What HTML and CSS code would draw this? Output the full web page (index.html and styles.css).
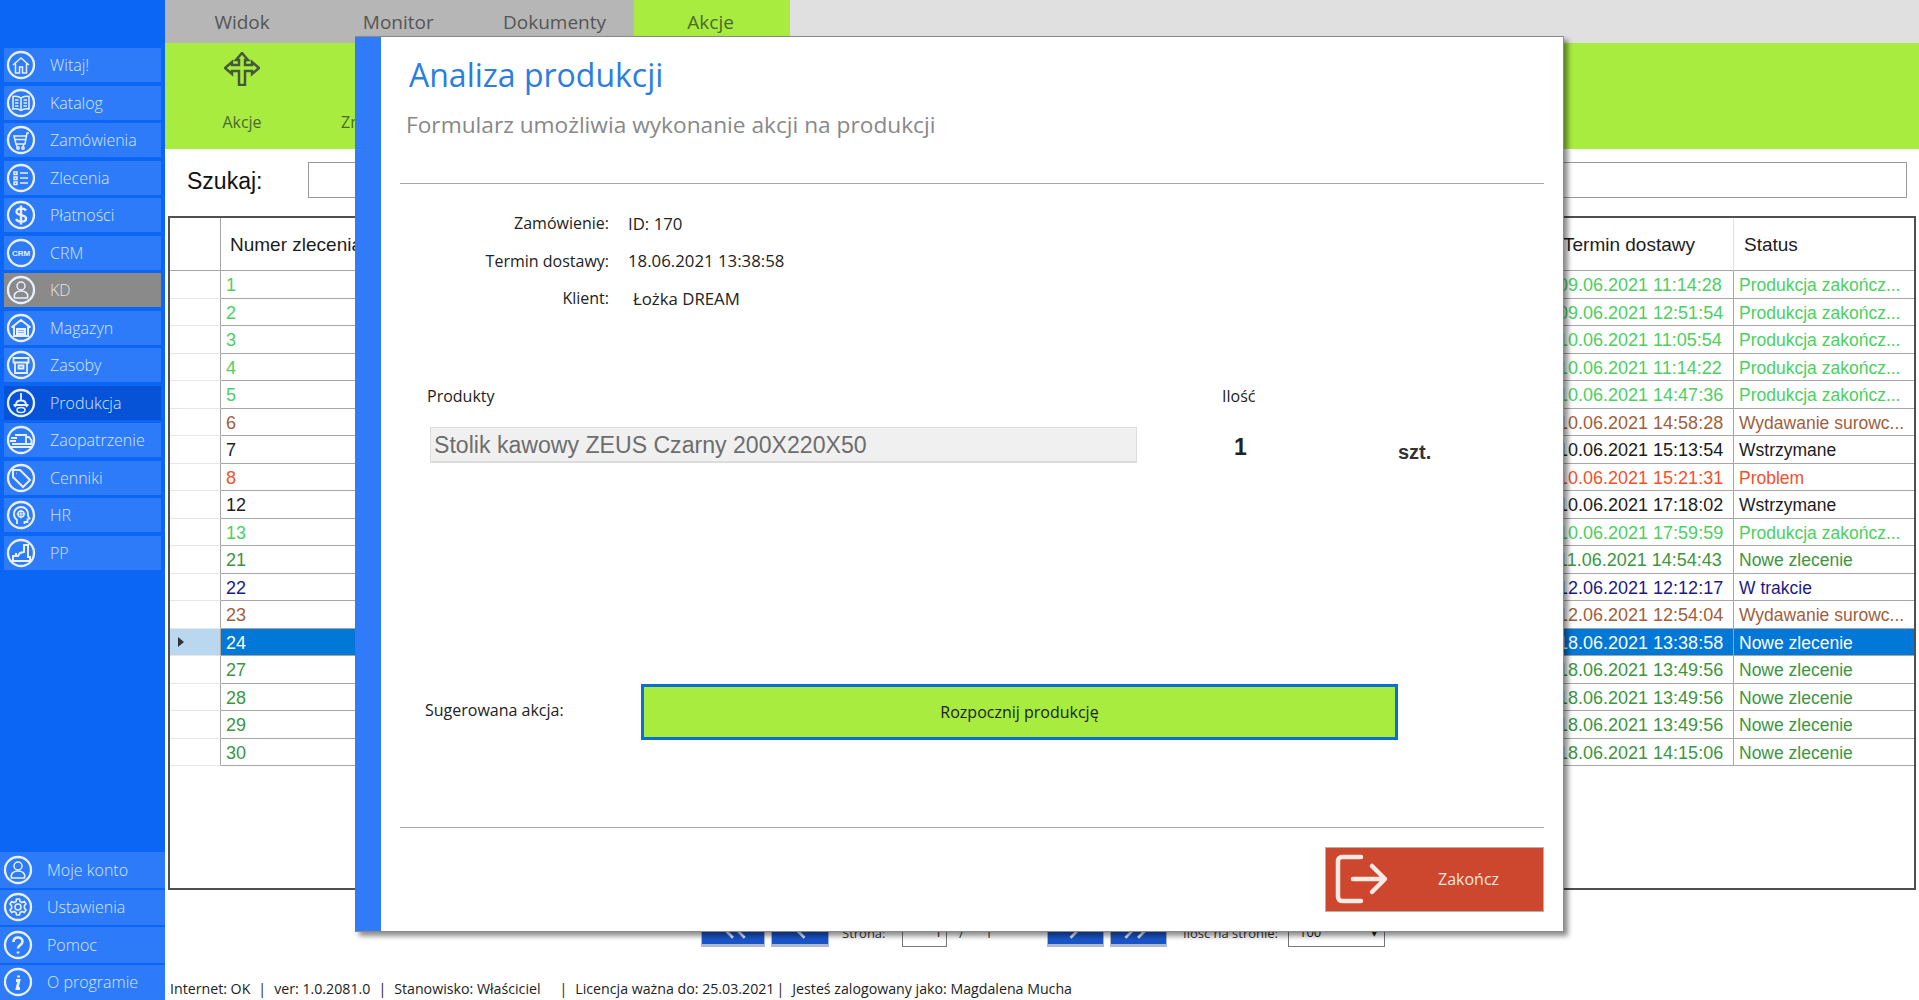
FILE: index.html
```html
<!DOCTYPE html>
<html lang="pl">
<head>
    <meta charset="UTF-8">
    <title>Analiza produkcji</title>
    <link rel="stylesheet" href="styles.css">
</head>
<body>
    <svg class="icon-defs" width="0" height="0">
        <symbol id="i-home" viewBox="0 0 32 32"><path d="M8 16 16 9l8 7M10.500 14.500V24h4v-6h3v6h4v-9.500"/></symbol>
        <symbol id="i-book" viewBox="0 0 32 32"><path d="M16 11c-2-1.500-5-2-8-1.500V22c3-.5 6 0 8 1.500 2-1.500 5-2 8-1.500V9.500c-3-.5-6 0-8 1.500zM16 11v12.500M10 13h3.500M10 16h3.500M10 19h3.500M18.500 13H22M18.500 16H22M18.500 19H22"/></symbol>
        <symbol id="i-cart" viewBox="0 0 32 32"><path d="M24 9h-2l-2 11h-9l-2-8h12M10 15.500h10.500M11 20l1 2.500M19 20l-1 2.500"/><circle cx="13" cy="24" r="1.200"/><circle cx="18" cy="24" r="1.200"/></symbol>
        <symbol id="i-list" viewBox="0 0 32 32"><path d="M9 10h3v2.500H9zM9 15h3v2.500H9zM9 20h3v2.500H9zM15 11h8M15 16h8M15 21h8"/></symbol>
        <symbol id="i-dollar" viewBox="0 0 32 32"><path d="M21 11.500c-1-1.500-3-2-5-2-2.500 0-4.500 1-4.500 3.200 0 4.800 9.500 2 9.500 6.800 0 2.300-2 3.200-4.500 3.200-2.300 0-4.500-.7-5.500-2.500M16 6.500v19" stroke-width="2.400"/></symbol>
        <symbol id="i-user" viewBox="0 0 32 32"><circle cx="16" cy="12" r="4"/><path d="M9.500 24c-1.500-5 3-7 6.500-7s8 2 6.500 7z"/></symbol>
        <symbol id="i-store" viewBox="0 0 32 32"><path d="M6.500 15.500 16 8l9.500 7.500M9 14.500V24h14v-9.500M12 24v-7h8v7M12 19.500h8M12 22h8" stroke-width="2"/></symbol>
        <symbol id="i-box" viewBox="0 0 32 32"><path d="M8.500 9h15v4.500h-15zM10 13.500V24h12V13.500M13.500 16.500h5v3h-5z" stroke-width="1.800"/></symbol>
        <symbol id="i-prod" viewBox="0 0 32 32"><path d="M16 6v8M11 18c0-3 2-4.500 5-4.500s5 1.500 5 4.500zM8.500 18h15M11 18l-1 2M21 18l1 2" stroke-width="1.800"/><ellipse cx="16" cy="23" rx="4" ry="2.500"/></symbol>
        <symbol id="i-truck" viewBox="0 0 32 32"><path d="M10 11h11v9H10M21 13h3l2.500 3.500V20H21M6 14h6M5 17h6M7 20h5M5 23h22" stroke-width="1.800"/></symbol>
        <symbol id="i-tag" viewBox="0 0 32 32"><path d="M8 8h7l10 10-7 7L8 15zM11.500 11.500h.5" stroke-width="2"/></symbol>
        <symbol id="i-head" viewBox="0 0 32 32"><path d="M12 25v-4c-2-1.500-3-3.500-3-6 0-4 3-7 7-7s7 3 7 7v2l1.500 2.500-2 .7V23h-3v2" stroke-width="1.800"/><circle cx="16" cy="15" r="3"/><path d="M16 10.500v9M11.500 15h9" stroke-width="1"/></symbol>
        <symbol id="i-robot" viewBox="0 0 32 32"><path d="M8 24v-5h5l2-3 4-1V8h4v12h2v4zM8 24h17M11 19v-3" stroke-width="2"/></symbol>
        <symbol id="i-gear" viewBox="0 0 32 32"><path d="M14.500 8h3l.5 2.500 2 1 2.300-1 1.700 2.400-1.600 1.800v2.600l1.600 1.800-1.700 2.400-2.300-1-2 1-.5 2.500h-3l-.5-2.500-2-1-2.300 1-1.700-2.400 1.600-1.800v-2.600l-1.600-1.800 1.700-2.400 2.300 1 2-1z" stroke-width="1.600"/><circle cx="16" cy="16" r="3"/></symbol>
        <symbol id="i-help" viewBox="0 0 32 32"><path d="M11.500 13c0-3 2-4.500 4.500-4.500s4.500 1.500 4.500 4c0 3.500-4.500 3.500-4.500 7M16 22.500v2" stroke-width="2.600"/></symbol>
        <symbol id="i-info" viewBox="0 0 32 32"><path d="M14 14.500h3l-2 8h3M16.500 9.500v2" stroke-width="2.800"/></symbol>
    </svg>

    <div class="app">
        <nav class="sidebar">
            <div class="menu">
                <a class="menu-item"><svg class="menu-icon"><circle cx="16" cy="16" r="13"/><use href="#i-home"/></svg>Witaj!</a>
                <a class="menu-item"><svg class="menu-icon"><circle cx="16" cy="16" r="13"/><use href="#i-book"/></svg>Katalog</a>
                <a class="menu-item"><svg class="menu-icon"><circle cx="16" cy="16" r="13"/><use href="#i-cart"/></svg>Zamówienia</a>
                <a class="menu-item"><svg class="menu-icon"><circle cx="16" cy="16" r="13"/><use href="#i-list"/></svg>Zlecenia</a>
                <a class="menu-item"><svg class="menu-icon"><circle cx="16" cy="16" r="13"/><use href="#i-dollar"/></svg>Płatności</a>
                <a class="menu-item"><svg class="menu-icon"><circle cx="16" cy="16" r="13"/><text class="crm-text" x="16" y="18.500" text-anchor="middle">CRM</text></svg>CRM</a>
                <a class="menu-item disabled"><svg class="menu-icon"><circle cx="16" cy="16" r="13"/><use href="#i-user"/></svg>KD</a>
                <a class="menu-item"><svg class="menu-icon"><circle cx="16" cy="16" r="13"/><use href="#i-store"/></svg>Magazyn</a>
                <a class="menu-item"><svg class="menu-icon"><circle cx="16" cy="16" r="13"/><use href="#i-box"/></svg>Zasoby</a>
                <a class="menu-item active"><svg class="menu-icon"><circle cx="16" cy="16" r="13"/><use href="#i-prod"/></svg>Produkcja</a>
                <a class="menu-item"><svg class="menu-icon"><circle cx="16" cy="16" r="13"/><use href="#i-truck"/></svg>Zaopatrzenie</a>
                <a class="menu-item"><svg class="menu-icon"><circle cx="16" cy="16" r="13"/><use href="#i-tag"/></svg>Cenniki</a>
                <a class="menu-item"><svg class="menu-icon"><circle cx="16" cy="16" r="13"/><use href="#i-head"/></svg>HR</a>
                <a class="menu-item"><svg class="menu-icon"><circle cx="16" cy="16" r="13"/><use href="#i-robot"/></svg>PP</a>
            </div>
            <div class="menu-bottom">
                <a class="menu-item"><svg class="menu-icon"><circle cx="16" cy="16" r="13"/><use href="#i-user"/></svg>Moje konto</a>
                <a class="menu-item"><svg class="menu-icon"><circle cx="16" cy="16" r="13"/><use href="#i-gear"/></svg>Ustawienia</a>
                <a class="menu-item"><svg class="menu-icon"><circle cx="16" cy="16" r="13"/><use href="#i-help"/></svg>Pomoc</a>
                <a class="menu-item"><svg class="menu-icon"><circle cx="16" cy="16" r="13"/><use href="#i-info"/></svg>O programie</a>
            </div>
        </nav>

        <main class="main">
            <div class="tabs">
                <div class="tab">Widok</div>
                <div class="tab">Monitor</div>
                <div class="tab">Dokumenty</div>
                <div class="tab tab-active">Akcje</div>
            </div>

            <div class="ribbon">
                <div class="ribbon-btn">
                    <svg class="move-icon" viewBox="0 0 36 34">
                        <path d="M18 1l6 7h-3v5h7v-3l7 6-7 6v-3h-7v14h-6V19H8v3l-7-6 7-6v3h7V8h-3z"/>
                    </svg>
                    <span>Akcje</span>
                </div>
                <div class="ribbon-btn ribbon-btn-next"><span>Zmień</span></div>
            </div>

            <div class="search">
                <label class="search-label">Szukaj:</label>
                <div class="search-input"></div>
            </div>

            <div class="grid">
                <div class="row row-head">
                    <div class="cell"></div><div class="cell">Numer zlecenia</div><div class="cell"></div><div class="cell">Termin dostawy</div><div class="cell">Status</div>
                </div>
                <div class="row done"><div class="cell"></div><div class="cell">1</div><div class="cell"></div><div class="cell">09.06.2021 11:14:28</div><div class="cell">Produkcja zakończ...</div></div>
                <div class="row done"><div class="cell"></div><div class="cell">2</div><div class="cell"></div><div class="cell">09.06.2021 12:51:54</div><div class="cell">Produkcja zakończ...</div></div>
                <div class="row done"><div class="cell"></div><div class="cell">3</div><div class="cell"></div><div class="cell">10.06.2021 11:05:54</div><div class="cell">Produkcja zakończ...</div></div>
                <div class="row done"><div class="cell"></div><div class="cell">4</div><div class="cell"></div><div class="cell">10.06.2021 11:14:22</div><div class="cell">Produkcja zakończ...</div></div>
                <div class="row done"><div class="cell"></div><div class="cell">5</div><div class="cell"></div><div class="cell">10.06.2021 14:47:36</div><div class="cell">Produkcja zakończ...</div></div>
                <div class="row issuing"><div class="cell"></div><div class="cell">6</div><div class="cell"></div><div class="cell">10.06.2021 14:58:28</div><div class="cell">Wydawanie surowc...</div></div>
                <div class="row"><div class="cell"></div><div class="cell">7</div><div class="cell"></div><div class="cell">10.06.2021 15:13:54</div><div class="cell">Wstrzymane</div></div>
                <div class="row problem"><div class="cell"></div><div class="cell">8</div><div class="cell"></div><div class="cell">10.06.2021 15:21:31</div><div class="cell">Problem</div></div>
                <div class="row"><div class="cell"></div><div class="cell">12</div><div class="cell"></div><div class="cell">10.06.2021 17:18:02</div><div class="cell">Wstrzymane</div></div>
                <div class="row done"><div class="cell"></div><div class="cell">13</div><div class="cell"></div><div class="cell">10.06.2021 17:59:59</div><div class="cell">Produkcja zakończ...</div></div>
                <div class="row new"><div class="cell"></div><div class="cell">21</div><div class="cell"></div><div class="cell">11.06.2021 14:54:43</div><div class="cell">Nowe zlecenie</div></div>
                <div class="row running"><div class="cell"></div><div class="cell">22</div><div class="cell"></div><div class="cell">12.06.2021 12:12:17</div><div class="cell">W trakcie</div></div>
                <div class="row issuing"><div class="cell"></div><div class="cell">23</div><div class="cell"></div><div class="cell">12.06.2021 12:54:04</div><div class="cell">Wydawanie surowc...</div></div>
                <div class="row selected"><div class="cell"><span class="row-arrow"></span></div><div class="cell">24</div><div class="cell"></div><div class="cell">18.06.2021 13:38:58</div><div class="cell">Nowe zlecenie</div></div>
                <div class="row new"><div class="cell"></div><div class="cell">27</div><div class="cell"></div><div class="cell">18.06.2021 13:49:56</div><div class="cell">Nowe zlecenie</div></div>
                <div class="row new"><div class="cell"></div><div class="cell">28</div><div class="cell"></div><div class="cell">18.06.2021 13:49:56</div><div class="cell">Nowe zlecenie</div></div>
                <div class="row new"><div class="cell"></div><div class="cell">29</div><div class="cell"></div><div class="cell">18.06.2021 13:49:56</div><div class="cell">Nowe zlecenie</div></div>
                <div class="row new"><div class="cell"></div><div class="cell">30</div><div class="cell"></div><div class="cell">18.06.2021 14:15:06</div><div class="cell">Nowe zlecenie</div></div>
            </div>

            <div class="pager">
                <div class="page-btn page-first"><svg viewBox="0 0 64 42"><path d="M32 9 19 22l13 13M45 9 32 22l13 13"/></svg></div>
                <div class="page-btn page-prev"><svg viewBox="0 0 58 42"><path d="M34 9 21 22l13 13"/></svg></div>
                <span class="page-text page-strona">Strona:</span>
                <div class="page-input">1</div>
                <span class="page-text page-slash">/</span>
                <span class="page-text page-total">1</span>
                <div class="page-btn page-next"><svg viewBox="0 0 57 42"><path d="M23 9l13 13-13 13"/></svg></div>
                <div class="page-btn page-last"><svg viewBox="0 0 57 42"><path d="M14 9l13 13-13 13M28 9l13 13-13 13"/></svg></div>
                <span class="page-text page-count">Ilość na stronie:</span>
                <div class="page-select">100<span class="select-arrow">▾</span></div>
            </div>

            <footer class="statusbar">
                <span>Internet: OK</span><span>|</span><span>ver: 1.0.2081.0</span><span>|</span><span>Stanowisko: Właściciel</span><span class="bar-wide">|</span><span>Licencja ważna do: 25.03.2021</span><span class="bar-tight">|</span><span>Jesteś zalogowany jako: Magdalena Mucha</span>
            </footer>
        </main>
    </div>

    <section class="modal">
        <div class="modal-bar"></div>
        <div class="modal-content">
            <header class="modal-head">
                <h1 class="modal-title">Analiza produkcji</h1>
                <p class="modal-sub">Formularz umożliwia wykonanie akcji na produkcji</p>
            </header>

            <div class="info">
                <span class="info-label">Zamówienie:</span><span class="info-value">ID: 170</span>
                <span class="info-label">Termin dostawy:</span><span class="info-value">18.06.2021 13:38:58</span>
                <span class="info-label">Klient:</span><span class="info-value info-client">Łożka DREAM</span>
            </div>

            <div class="products">
                <span class="products-label">Produkty</span>
                <span class="qty-label">Ilość</span>
                <span></span>
                <div class="product-name">Stolik kawowy ZEUS Czarny 200X220X50</div>
                <div class="qty-value">1</div>
                <div class="qty-unit">szt.</div>
            </div>

            <div class="action">
                <span class="action-label">Sugerowana akcja:</span>
                <button class="action-btn">Rozpocznij produkcję</button>
            </div>

            <footer class="modal-foot">
                <button class="close-btn">
                    <svg class="close-icon" viewBox="0 0 56 56">
                        <path d="M26 6H7a4 4 0 0 0-4 4v36a4 4 0 0 0 4 4h19M18 28h30M37 15l13 13-13 13"/>
                    </svg>
                    <span>Zakończ</span>
                </button>
            </footer>
        </div>
    </section>
</body>
</html>
```
FILE: styles.css
```css
* {
    box-sizing: border-box;
}
body {
    margin: 0;
    height: 100vh;
    overflow: hidden;
    background-color: white;
    font-family: 'Open Sans', sans-serif;
    color: #222;
}
.icon-defs {
    position: absolute;
}
.app {
    display: flex;
    height: 100vh;
}

/* menu po lewej */
.sidebar {
    width: 165px;
    flex-shrink: 0;
    display: flex;
    flex-direction: column;
    justify-content: space-between;
    padding-top: 48px;
    background-color: #0b65f5;
}
.menu {
    display: flex;
    flex-direction: column;
    gap: 3.500px;
    padding: 0 4px;
}
.menu-bottom {
    display: flex;
    flex-direction: column;
    gap: 2px;
}
.menu-item {
    display: flex;
    align-items: center;
    gap: 13px;
    height: 34px;
    padding-left: 1px;
    background-color: #2e7bfa;
    color: #d7e6ff;
    font-size: 16px;
    font-weight: 300;
    white-space: nowrap;
}
.menu-bottom .menu-item {
    height: 35.500px;
    padding-left: 2px;
}
.menu-item.disabled {
    background-color: #8a8a8a;
    color: #e4e4e4;
}
.menu-item.active {
    background-color: #0653d8;
}
.menu-icon {
    width: 32px;
    height: 32px;
    flex-shrink: 0;
    fill: none;
    stroke: #e8f0ff;
    stroke-width: 2.300;
}
.menu-icon use {
    stroke-width: 1.500;
}
.crm-text {
    font-family: 'Liberation Sans', sans-serif;
    font-size: 8px;
    font-weight: bold;
    fill: #e8f0ff;
    stroke: none;
}

/* gorna czesc */
.main {
    flex: 1;
    min-width: 0;
    display: flex;
    flex-direction: column;
}
.tabs {
    display: flex;
    height: 43px;
    flex-shrink: 0;
    background-color: #e0e0e0;
}
.tab {
    width: 156.200px;
    padding: 9px 2px 0 0;
    text-align: center;
    font-size: 19px;
    color: #555;
    background-color: #b6b6b6;
}
.tab-active {
    background-color: #a8ec3f;
    color: #4b6a2c;
}
.ribbon {
    display: flex;
    height: 106px;
    flex-shrink: 0;
    background-color: #a8ec3f;
    color: #4b6a2c;
    font-size: 16px;
}
.ribbon-btn {
    width: 100px;
    margin-left: 27px;
    display: flex;
    flex-direction: column;
    align-items: center;
    padding-top: 9px;
}
.ribbon-btn span {
    margin-top: 25px;
}
.ribbon-btn-next {
    margin-left: 49px;
    padding-top: 68px;
    align-items: flex-start;
}
.ribbon-btn-next span {
    margin-top: 0;
}
.move-icon {
    width: 36px;
    height: 34px;
    fill: none;
    stroke: #46583c;
    stroke-width: 2.500;
}
.search {
    display: flex;
    align-items: center;
    height: 67px;
    flex-shrink: 0;
    padding: 0 12px 6px 22px;
}
.search-label {
    width: 121px;
    margin-top: 4px;
    font-family: 'Liberation Sans', sans-serif;
    font-size: 23px;
    color: #111;
}
.search-input {
    flex: 1;
    height: 36px;
    border: 1px solid #9a9a9a;
}

/* tabela */
.grid {
    height: 674px;
    flex-shrink: 0;
    margin: 0 3px;
    border: 2px solid #505050;
    font-family: 'Liberation Sans', sans-serif;
    font-size: 18px;
}
.row {
    display: grid;
    grid-template-columns: 51px 340px 1fr 181px 180px;
    height: 27.500px;
    line-height: 28px;
    color: #1c1c1c;
    white-space: nowrap;
}
.cell {
    padding-left: 5px;
    overflow: hidden;
    border-bottom: 1px solid #a6a6a6;
}
.cell:first-child {
    border-bottom-color: #e6e6e6;
    border-right: 1px solid #a6a6a6;
}
.cell:nth-child(4) {
    border-right: 1px solid #a6a6a6;
}
.cell:last-child {
    font-size: 17.500px;
}
.row-head {
    height: 53px;
    line-height: 54px;
}
.row-head .cell {
    padding-left: 9px;
    font-size: 19px;
}
.row-head .cell:first-child {
    border-bottom-color: #a6a6a6;
}
.row-head .cell:nth-child(4) {
    border-right-color: #e2e2e2;
    padding-left: 10px;
}
.row-head .cell:last-child {
    padding-left: 10px;
}
.done {
    color: #4cd05f;
}
.issuing {
    color: #a0603a;
}
.problem {
    color: #f4502a;
}
.new {
    color: #3c963f;
}
.running {
    color: #1c1a86;
}
.selected {
    color: white;
}
.selected .cell {
    background-color: #0078d7;
}
.selected .cell:first-child {
    background-color: #bad7f0;
    display: flex;
    align-items: center;
    padding-left: 8px;
}
.row-arrow {
    width: 0;
    height: 0;
    border-top: 5px solid transparent;
    border-bottom: 5px solid transparent;
    border-left: 6px solid #333;
}

/* strony */
.pager {
    display: flex;
    align-items: flex-end;
    height: 42px;
    margin-top: 15px;
    padding-left: 536px;
    flex-shrink: 0;
    font-size: 13px;
}
.page-btn {
    height: 42px;
    margin-right: 6px;
    background-color: #1a55c8;
    border: 1px solid #b0b8d0;
    border-bottom-width: 3px;
}
.page-first {
    width: 64px;
}
.page-prev {
    width: 58px;
    margin-right: 0;
}
.page-next,
.page-last {
    width: 57px;
}
.page-btn svg {
    display: block;
    width: 100%;
    height: 100%;
    fill: none;
    stroke: #e4ecff;
    stroke-width: 3;
}
.page-text {
    margin-bottom: 4px;
    line-height: 20px;
    color: #333;
}
.page-strona {
    margin-left: 13px;
    width: 60px;
}
.page-input {
    width: 45px;
    height: 25px;
    border: 1px solid #777;
    text-align: right;
    padding-right: 4px;
}
.page-slash {
    margin-left: 12px;
    width: 26px;
}
.page-total {
    width: 62px;
}
.page-count {
    margin-left: 10px;
    width: 105px;
}
.page-select {
    width: 97px;
    height: 25px;
    padding: 0 6px 0 10px;
    line-height: 18px;
    border: 1px solid #777;
    display: flex;
    justify-content: space-between;
}
.statusbar {
    margin-top: auto;
    height: 24px;
    display: flex;
    gap: 8px;
    align-items: center;
    padding-left: 5px;
    font-size: 14.200px;
    color: #222;
    white-space: nowrap;
}
.bar-wide {
    margin-left: 11px;
}
.bar-tight {
    margin-left: -6px;
}

/* okno z analiza, lezy nad reszta */
.modal {
    position: absolute;
    left: 355px;
    top: 36px;
    width: 1209px;
    height: 896px;
    display: flex;
    background-color: white;
    border: 1px solid #8a8a8a;
    border-left: 0;
    box-shadow: 4px 4px 5px rgba(0, 0, 0, 0.45);
}
.modal-bar {
    width: 26px;
    flex-shrink: 0;
    background-color: #2f7bfa;
}
.modal-content {
    flex: 1;
    display: flex;
    flex-direction: column;
    padding: 0 19px 0 19px;
    font-size: 16px;
}
.modal-head {
    height: 147px;
    flex-shrink: 0;
    padding: 16px 0 0 9px;
    border-bottom: 1px solid #a8a8a8;
}
.modal-title {
    margin: 0;
    font-size: 32px;
    font-weight: 400;
    line-height: 44px;
    color: #2b7de0;
}
.modal-sub {
    margin: 13px 0 0 -3px;
    font-size: 22.700px;
    line-height: 30px;
    color: #888;
}
.info {
    display: grid;
    grid-template-columns: 209px 1fr;
    grid-auto-rows: 37.500px;
    column-gap: 19px;
    align-items: center;
    margin-top: 20.500px;
    flex-shrink: 0;
}
.info-label {
    text-align: right;
}
.info-value {
    font-size: 16.800px;
}
.info-client {
    padding-left: 5px;
}
.products {
    display: grid;
    grid-template-columns: 707px 261px auto;
    grid-template-rows: 20px 36px;
    row-gap: 20px;
    margin: 69.500px 0 0 30px;
    flex-shrink: 0;
}
.products-label {
    margin-left: -3px;
    line-height: 18px;
}
.qty-label {
    padding-left: 85px;
    line-height: 18px;
}
.product-name {
    background-color: #f0f0f0;
    border: 1px solid #dcdcdc;
    border-bottom-width: 2px;
    padding-left: 3px;
    font-family: 'Liberation Sans', sans-serif;
    font-size: 23.100px;
    line-height: 34px;
    color: #6d6d6d;
}
.qty-value {
    padding-left: 97px;
    font-family: 'Liberation Sans', sans-serif;
    font-size: 23px;
    font-weight: bold;
    line-height: 40px;
    color: #222;
}
.qty-unit {
    font-family: 'Liberation Sans', sans-serif;
    font-size: 20px;
    font-weight: bold;
    line-height: 50px;
    color: #333;
}
.action {
    display: flex;
    align-items: center;
    margin: 221px 0 0 25px;
    flex-shrink: 0;
}
.action-label {
    width: 216px;
    margin-top: -4px;
}
.action-btn {
    width: 757px;
    height: 56px;
    background-color: #a8ec3f;
    border: 3px solid #0a6fd0;
    font-family: 'Open Sans', sans-serif;
    font-size: 16px;
    color: #222;
}
.modal-foot {
    margin-top: 87px;
    padding-top: 19px;
    display: flex;
    justify-content: flex-end;
    border-top: 1px solid #a8a8a8;
}
.close-btn {
    width: 219px;
    height: 65px;
    display: flex;
    align-items: center;
    padding: 0 0 0 9px;
    background-color: #cc472e;
    border: 1px solid #b9b0a8;
    font-family: 'Open Sans', sans-serif;
    font-size: 16px;
    color: #f4e4df;
}
.close-icon {
    width: 56px;
    height: 56px;
    flex-shrink: 0;
    fill: none;
    stroke: #fde9e4;
    stroke-width: 4.500;
    stroke-linecap: round;
    stroke-linejoin: round;
}
.close-btn span {
    margin-left: 47px;
}
```
